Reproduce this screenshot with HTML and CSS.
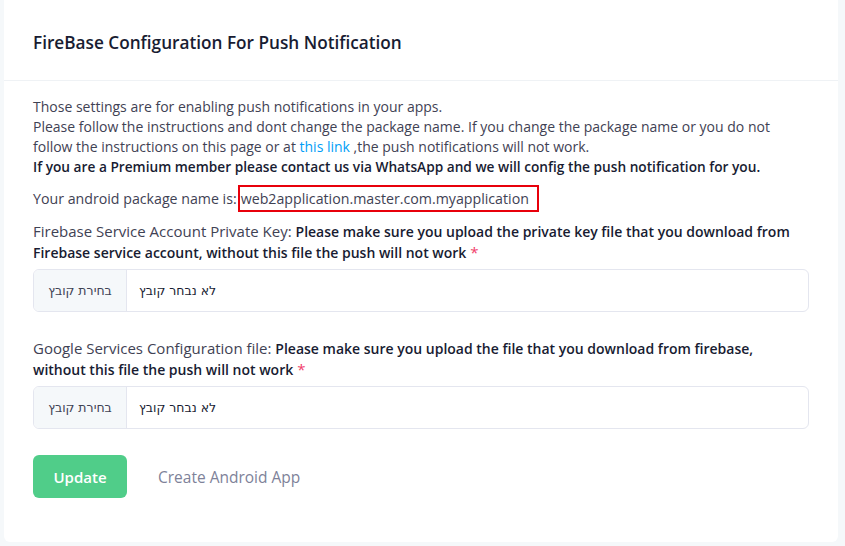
FILE: index.html
```html
<!DOCTYPE html>
<html lang="en">
<head>
<meta charset="utf-8">
<title>FireBase Configuration</title>
<link rel="stylesheet" href="styles.css">
</head>
<body>
<div class="card">
  <div class="card-header">
    <h3 class="card-title">FireBase Configuration For Push Notification</h3>
  </div>
  <div class="card-body">
    <p class="intro">Those settings are for enabling push notifications in your apps.<br>
    Please follow the instructions and dont change the package name. If you change the package name or you do not follow the instructions on this page or at <a class="link" href="#">this link</a> ,the push notifications will not work.<br>
    <strong>If you are a Premium member please contact us via WhatsApp and we will config the push notification for you.</strong></p>
    <div class="package"><span>Your android package name is:</span><span class="pkg-box">web2application.master.com.myapplication</span></div>

    <div class="field">
      <label class="label">Firebase Service Account Private Key: <strong>Please make sure you upload the private key file that you download from Firebase service account, without this file the push will not work</strong> <span class="req">*</span></label>
      <div class="file-input">
        <div class="file-btn" dir="rtl">בחירת קובץ</div>
        <div class="file-name" dir="rtl">לא נבחר קובץ</div>
      </div>
    </div>

    <div class="field field-second">
      <label class="label">Google Services Configuration file: <strong>Please make sure you upload the file that you download from firebase, without this file the push will not work</strong> <span class="req">*</span></label>
      <div class="file-input">
        <div class="file-btn" dir="rtl">בחירת קובץ</div>
        <div class="file-name" dir="rtl">לא נבחר קובץ</div>
      </div>
    </div>

    <div class="actions">
      <button class="btn-update" type="button">Update</button>
      <a class="btn-link" href="#">Create Android App</a>
    </div>
  </div>
</div>
</body>
</html>
```
FILE: styles.css
```css
html, body {
  margin: 0;
  padding: 0;
}
body {
  background: #f5f8fa;
  font-family: "Open Sans", "Liberation Sans", sans-serif;
  font-size: 14px;
  color: #3f4254;
  padding: 0 7px 4px 4px;
}
.card {
  background: #ffffff;
  border-radius: 0 0 6px 6px;
  height: 542px;
  box-sizing: border-box;
}
.card-header {
  height: 81px;
  border-bottom: 1px solid #eff2f5;
  display: flex;
  align-items: center;
  padding: 4px 29px 0 29px;
  box-sizing: border-box;
}
.card-title {
  margin: 0;
  font-size: 17.2px;
  font-weight: 600;
  color: #181c32;
}
.card-body {
  padding: 16px 29px 0 29px;
}
.intro {
  margin: 0;
  line-height: 20px;
  font-size: 14px;
  color: #3f4254;
}
.intro strong {
  color: #181c32;
  font-weight: 600;
  font-size: 13.7px;
}
.link {
  color: #009ef7;
  text-decoration: none;
}
.package {
  margin-top: 8px;
  height: 27px;
  display: flex;
  align-items: center;
  font-size: 14.2px;
}
.pkg-box {
  height: 27px;
  box-sizing: border-box;
  border: 2px solid #e8000b;
  padding: 0 8px 0 1px;
  margin-left: 1px;
  display: flex;
  align-items: center;
}
.field {
  margin-top: 7px;
}
.field-second {
  margin-top: 24px;
}
.label {
  display: block;
  box-sizing: border-box;
  height: 42px;
  padding-top: 1.5px;
  line-height: 20px;
  font-size: 15px;
  color: #3f4254;
}
.label strong {
  font-weight: 600;
  font-size: 14px;
  color: #181c32;
}
.req {
  color: #f1416c;
}
.file-input {
  margin-top: 8px;
  display: flex;
  height: 43px;
  border: 1px solid #e4e6ef;
  border-radius: 6px;
  overflow: hidden;
  box-sizing: border-box;
}
.file-btn {
  width: 92px;
  background: #f5f8fa;
  border-right: 1px solid #e4e6ef;
  display: flex;
  align-items: center;
  justify-content: center;
  color: #3f4254;
  font-family: "DejaVu Sans", "Liberation Sans", sans-serif;
  font-size: 12.5px;
}
.file-name {
  flex: 1;
  display: flex;
  align-items: center;
  padding-left: 12px;
  justify-content: flex-end;
  font-family: "DejaVu Sans", "Liberation Sans", sans-serif;
  font-size: 12.5px;
  color: #181c32;
}
.actions {
  margin-top: 26px;
  display: flex;
  align-items: center;
}
.btn-update {
  width: 94px;
  height: 43px;
  border: 0;
  border-radius: 6px;
  background: #50cd89;
  color: #ffffff;
  font-family: "Open Sans", "Liberation Sans", sans-serif;
  font-size: 15px;
  font-weight: 600;
}
.btn-link {
  margin-left: 31px;
  color: #7e8299;
  text-decoration: none;
  font-size: 15.5px;
  font-weight: 500;
}
```
